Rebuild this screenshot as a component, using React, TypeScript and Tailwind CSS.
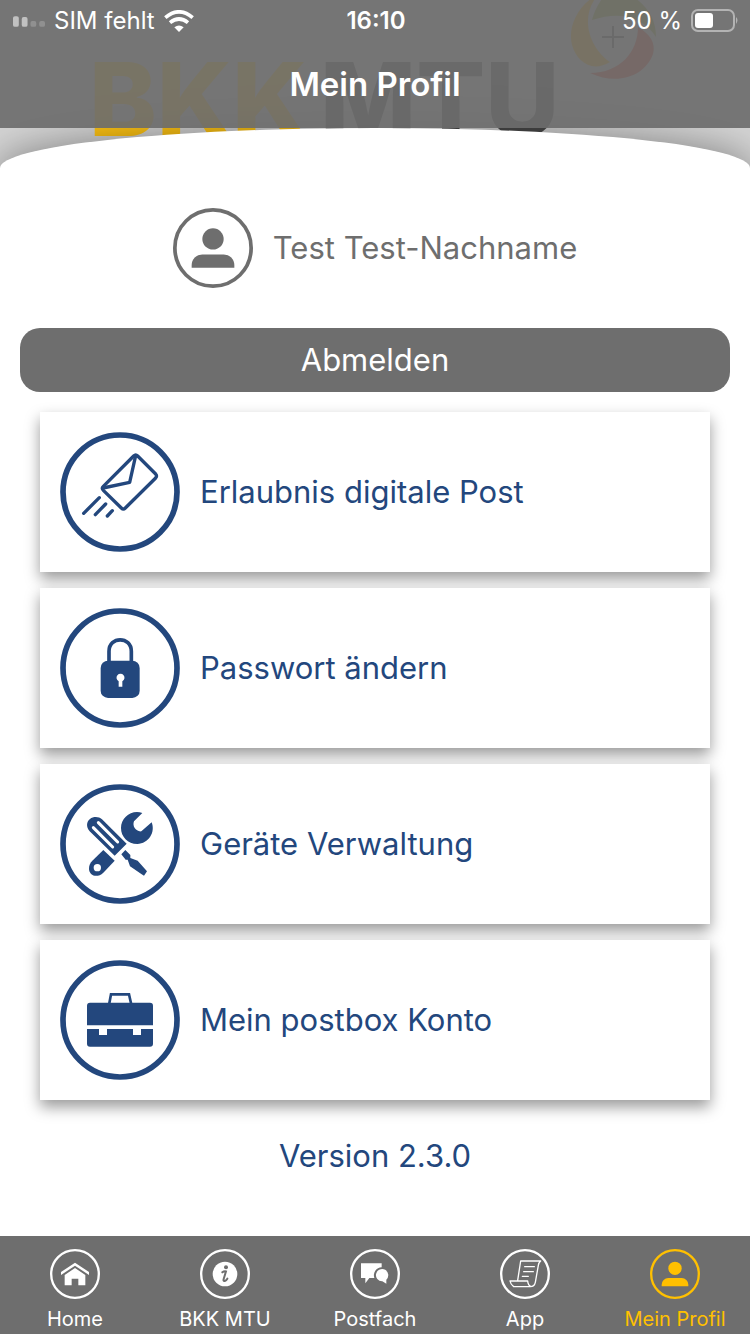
import React, { useState } from 'react'
import { clsx } from 'clsx'

type IconProps = {
    className?: string
}

const PersonIcon = ({ className }: IconProps) => (
    <svg viewBox="0 0 150 150" className={className} fill="currentColor" aria-hidden="true">
        <circle cx="75" cy="75" r="71.5" fill="none" stroke="currentColor" strokeWidth="7" />
        <circle cx="75" cy="58" r="20" />
        <path d="M35 112 v-5 a20 20 0 0 1 20 -20 h40 a20 20 0 0 1 20 20 v5 z" />
    </svg>
)

const MailIcon = ({ className }: IconProps) => (
    <svg viewBox="60 36 360 360" className={className} fill="none" stroke="currentColor" strokeLinecap="round" strokeLinejoin="round" aria-hidden="true">
        <circle cx="240" cy="216" r="171" strokeWidth="17" />
        <path strokeWidth="10" d="M281 108 Q287 102 293 108 L347 162 Q352 168 347 174 L256 264 Q250 270 244 264 L190 211 Q184 205 190 199 Z" />
        <path strokeWidth="10" d="M287 107 L269 187 L189 204" />
        <path strokeWidth="10" d="M178 233 L131 280 M197 252 L166 284 M217 272 L202 288" />
    </svg>
)

const LockIcon = ({ className }: IconProps) => (
    <svg viewBox="60 36 360 360" className={className} fill="currentColor" stroke="currentColor" aria-hidden="true">
        <circle cx="240" cy="216" r="171" fill="none" strokeWidth="17" />
        <path fill="none" strokeWidth="11" d="M207 198 V166 C207 120 274 120 274 166 V198" />
        <rect x="182" y="194" width="117" height="112" rx="22" stroke="none" />
        <path fill="white" stroke="none" d="M236 272 V256 A12 12 0 1 1 247 256 V272 Z" />
    </svg>
)

const ToolsIcon = ({ className }: IconProps) => (
    <svg viewBox="60 36 360 360" className={className} fill="currentColor" aria-hidden="true">
        <circle cx="240" cy="216" r="171" fill="none" stroke="currentColor" strokeWidth="17" />
        <path d="M149 178 C137 164 140 148 150 141 C160 133 176 133 186 142 L260 215 L224 251 Z" />
        <path d="M160 167 L218 225 M175 152 L233 210" stroke="white" strokeWidth="9" strokeLinecap="round" />
        <path d="M256 234 L271 249 V258 L293 266 L321 298 L312 311 L305 307 L270 283 L263 263 L257 263 L244 247 Z" />
        <path d="M190 234 L224 266 L190 302 C170 321 147 309 147 290 C147 280 150 273 157 266 Z" />
        <circle cx="172" cy="287" r="11" fill="white" />
        <path d="M307 123 L282 148 C276 162 288 180 304 178 L335 151 C347 181 326 215 292 216 C263 216 243 194 243 168 C243 136 275 112 307 123 Z" />
    </svg>
)

const CaseIcon = ({ className }: IconProps) => (
    <svg viewBox="60 36 360 360" className={className} fill="currentColor" aria-hidden="true">
        <circle cx="240" cy="216" r="171" fill="none" stroke="currentColor" strokeWidth="17" />
        <path fill="none" stroke="currentColor" strokeWidth="8" d="M208 166 L213 139 H267 L273 166" />
        <path d="M141 232 V173 Q141 164 150 164 H330 Q339 164 339 173 V232 Z" />
        <path d="M141 243 H177 V261 H201 V243 H279 V261 H303 V243 H339 V287 Q339 296 330 296 H150 Q141 296 141 287 Z" />
    </svg>
)

const HomeIcon = ({ className }: IconProps) => (
    <svg viewBox="147 57 150 150" className={className} fill="currentColor" aria-hidden="true">
        <circle cx="222" cy="132" r="71.5" fill="none" stroke="currentColor" strokeWidth="7" />
        <path d="M222 98 L264 126 V135 L222 107 L180 135 V126 Z" />
        <path d="M222 114 L253 135 V166 H232 V146 H212 V166 H191 V135 Z" />
    </svg>
)

const InfoIcon = ({ className }: IconProps) => (
    <svg viewBox="600 57 150 150" className={className} fill="currentColor" aria-hidden="true">
        <circle cx="675" cy="132" r="71.5" fill="none" stroke="currentColor" strokeWidth="7" />
        <circle cx="675" cy="132" r="37" />
        <circle cx="678" cy="112" r="6" fill="#6e6e6e" />
        <path fill="none" stroke="#6e6e6e" strokeWidth="6" strokeLinecap="round" d="M667 127 Q673 122 678 124 L671 147 Q669 154 674 153 Q679 151 682 146" />
    </svg>
)

const ChatIcon = ({ className }: IconProps) => (
    <svg viewBox="0 0 150 150" className={className} fill="currentColor" aria-hidden="true">
        <circle cx="75" cy="75" r="71.5" fill="none" stroke="currentColor" strokeWidth="7" />
        <path d="M33 43 H95 V55 A24 24 0 0 0 73 87 H58 L46 103 V87 H33 Z" />
        <path d="M109 104 L97 97 A18.5 18.5 0 1 1 109 92 Z" />
    </svg>
)

const ScrollIcon = ({ className }: IconProps) => (
    <svg viewBox="372 57 150 150" className={className} fill="none" stroke="currentColor" strokeLinecap="round" strokeLinejoin="round" aria-hidden="true">
        <circle cx="447" cy="132" r="71.5" strokeWidth="7" />
        <path strokeWidth="4" d="M425 151 L434 93 H494 Q488 98 487 106 L478 157 Q475 170 463 170 H413 Q404 164 402 153 H455 Q456 166 465 170" />
        <path strokeWidth="4" d="M446 110 H475 M443 125 H472 M439 139 H457" />
    </svg>
)

const Logo = () => (
    <div className="absolute inset-x-0 top-0 h-44 overflow-hidden" aria-hidden="true">
        <svg viewBox="0 0 750 176" className="w-full">
            <g fontFamily="Inter" fontWeight="800" fontSize="102">
                <text x="89" y="136" fill="#ffc414">BKK</text>
                <text x="320" y="136" fill="#4a4a4a">MTU</text>
            </g>
            <path fill="#f5b50a" d="M592 -2 C575 10 568 30 572 45 C577 62 592 73 610 62 C592 50 578 20 597 -4 Z" />
            <path fill="#e0402a" d="M590 73 C620 73 638 52 638 27 C650 34 656 43 653 54 C645 76 618 86 590 73 Z" />
            <path fill="#93a82c" d="M592 20 C594 12 598 4 604 -4 H632 C648 6 656 20 656 37 C644 18 622 10 592 20 Z" />
            <path stroke="#4a4a4a" strokeWidth="2" d="M613 26 V48 M602 37 H624" />
        </svg>
    </div>
)

const StatusBar = () => (
    <div className="grid h-[42px] grid-cols-3 items-center pr-[11px] pl-[13px] text-2xl">
        <div className="flex items-center gap-[9px]">
            <svg viewBox="0 0 33 12" className="h-3 w-8" fill="white" aria-hidden="true">
                <rect x="0" y="1" width="6" height="11" rx="2" opacity="0.55" />
                <rect x="9" y="2" width="6" height="10" rx="2" opacity="0.55" />
                <rect x="18" y="6" width="6" height="6" rx="2" opacity="0.2" />
                <rect x="27" y="6" width="6" height="6" rx="2" opacity="0.2" />
            </svg>
            <span>SIM fehlt</span>
            <svg viewBox="0 0 90 66" className="h-[22px] w-[30px]" fill="none" stroke="white" strokeWidth="11" aria-hidden="true">
                <path d="M4 23 Q45 -12 86 23" />
                <path d="M18 38 Q45 16 72 38" />
                <path d="M45 66 L31 52 Q45 41 59 52 Z" fill="white" stroke="none" />
            </svg>
        </div>
        <time className="text-center font-semibold">16:10</time>
        <div className="flex items-center justify-end gap-[9px]">
            <span>50 %</span>
            <svg viewBox="0 0 48 24" className="h-6 w-12" aria-hidden="true">
                <rect x="1" y="1" width="42" height="21" rx="6" fill="none" stroke="white" strokeOpacity="0.45" strokeWidth="2" />
                <rect x="4" y="4" width="18" height="15" rx="3" fill="white" />
                <path d="M45 8 Q48 11 45 15 Z" fill="white" fillOpacity="0.45" />
            </svg>
        </div>
    </div>
)

const entries = [
    { label: 'Erlaubnis digitale Post', Icon: MailIcon },
    { label: 'Passwort ändern', Icon: LockIcon },
    { label: 'Geräte Verwaltung', Icon: ToolsIcon },
    { label: 'Mein postbox Konto', Icon: CaseIcon },
]

const tabs = [
    { label: 'Home', Icon: HomeIcon },
    { label: 'BKK MTU', Icon: InfoIcon },
    { label: 'Postfach', Icon: ChatIcon },
    { label: 'App', Icon: ScrollIcon },
    { label: 'Mein Profil', Icon: PersonIcon },
]

const App = () => {

    const [activeTab, setActiveTab] = useState('Mein Profil')

    return (
        <div className="relative isolate flex min-h-screen flex-col overflow-hidden bg-[#d4d4d4] font-['Inter',sans-serif]">
            <Logo />

            <header className="relative z-10 h-32 bg-[#6d6d6d]/92 text-white">
                <StatusBar />
                <h1 className="pt-[22px] text-center text-[33px] leading-10 font-semibold">Mein Profil</h1>
            </header>

            <main className="relative flex-1 rounded-t-[50%_40px] bg-white px-5 pt-20 pb-14 shadow-[0_0_40px_rgba(0,0,0,0.4)]">
                <div className="flex items-center justify-center gap-5 text-[#6e6e6e]">
                    <PersonIcon className="size-20" />
                    <p className="text-[31px] leading-10">Test Test-Nachname</p>
                </div>

                <button type="button" className="mt-10 h-16 w-full rounded-[20px] bg-[#6e6e6e] text-[31px] leading-10 text-white">
                    Abmelden
                </button>

                <div className="mt-5 flex flex-col gap-4 px-5">
                    {entries.map(({ label, Icon }) => (
                        <button
                            key={label}
                            type="button"
                            className="flex items-center gap-5 bg-white p-5 text-left text-[31px] leading-10 text-[#23477d] shadow-[0_7px_14px_rgba(0,0,0,0.4)]"
                        >
                            <Icon className="size-30 shrink-0" />
                            {label}
                        </button>
                    ))}
                </div>

                <p className="mt-9 text-center text-[31px] leading-10 text-[#23477d]">Version 2.3.0</p>
            </main>

            <nav className="relative grid grid-cols-5 bg-[#6e6e6e] pt-[13px] pb-[3px]">
                {tabs.map(({ label, Icon }) => (
                    <button
                        key={label}
                        type="button"
                        onClick={() => setActiveTab(label)}
                        className={clsx('flex flex-col items-center gap-2 text-[20px] leading-6', activeTab === label ? 'text-[#ffc000]' : 'text-white')}
                    >
                        <Icon className="size-[50px]" />
                        {label}
                    </button>
                ))}
            </nav>
        </div>
    )
}

export default App
